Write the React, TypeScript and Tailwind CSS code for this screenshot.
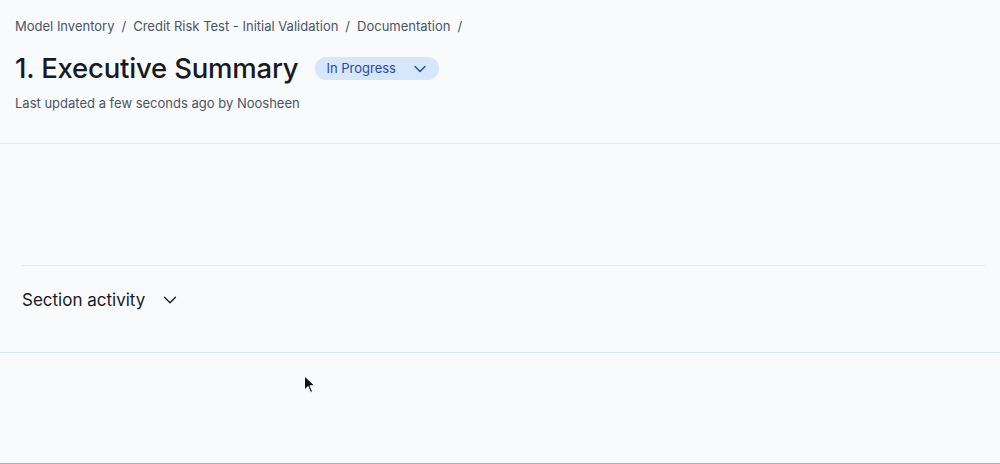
import { ChevronDown } from "lucide-react";

export default function App() {
  return (
    <div
      className="relative h-[464px] w-[1000px] overflow-hidden bg-[#f9fafb] text-[#1a202c]"
      style={{ fontFamily: "Inter, 'Noto Sans', sans-serif" }}
    >
      {/* Header */}
      <div className="h-[143px] px-[15px] pt-[16px]">
        <nav className="flex items-center gap-[7px] text-[13px] leading-[20px] text-[#4a5568]">
          <span>Model Inventory</span>
          <span>/</span>
          <span>Credit Risk Test - Initial Validation</span>
          <span>/</span>
          <span>Documentation</span>
          <span>/</span>
        </nav>
        <div className="mt-[12px] flex items-center gap-[17px]">
          <h1 className="text-[27.5px] font-medium leading-[40px] tracking-[-0.2px] text-[#171923]">
            1. Executive Summary
          </h1>
          <button className="flex h-[23px] items-center gap-[14px] rounded-full bg-[#d6e6fb] pl-[11px] pr-[9px] pt-px text-[13px] text-[#2c4a9e]">
            In Progress
            <ChevronDown className="h-[20px] w-[20px]" strokeWidth={1.7} />
          </button>
        </div>
        <p className="mt-[6px] text-[13px] leading-[18px] text-[#4a5568]">
          Last updated a few seconds ago by Noosheen
        </p>
      </div>
      <div className="border-t border-[#e2e8f0]" />

      {/* Content */}
      <div className="h-[121px]" />
      <div className="ml-[22px] mr-[15px] border-t border-[#e2e8f0]" />
      <div className="flex h-[86px] items-start gap-[14px] px-[22px] pt-[22px]">
        <span className="text-[17px] leading-[24px] text-[#171923]">Section activity</span>
        <ChevronDown className="mt-px h-[22px] w-[22px] text-[#171923]" strokeWidth={1.4} />
      </div>
      <div className="border-t border-[#dde5ee]" />

      {/* Cursor */}
      <svg
        className="absolute left-[303px] top-[375px]"
        width="14"
        height="20"
        viewBox="0 0 14 20"
      >
        <path
          d="M1.5 1 L1.5 15 L5 11.5 L7.6 17.5 L9.6 16.6 L7 10.8 L11.8 10.8 Z"
          fill="#111"
          stroke="#fff"
          strokeWidth="1"
        />
      </svg>

      <div className="absolute bottom-0 left-0 right-0 h-px bg-[#b0b0b0]" />
    </div>
  );
}
